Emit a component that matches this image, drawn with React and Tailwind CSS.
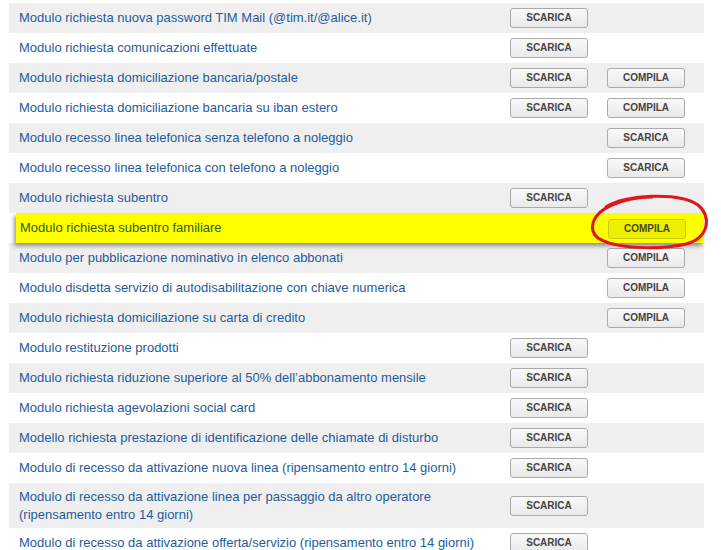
const rows = [
  { label: 'Modulo richiesta nuova password TIM Mail (@tim.it/@alice.it)', a: 'SCARICA' },
  { label: 'Modulo richiesta comunicazioni effettuate', a: 'SCARICA' },
  { label: 'Modulo richiesta domiciliazione bancaria/postale', a: 'SCARICA', b: 'COMPILA' },
  { label: 'Modulo richiesta domiciliazione bancaria su iban estero', a: 'SCARICA', b: 'COMPILA' },
  { label: 'Modulo recesso linea telefonica senza telefono a noleggio', b: 'SCARICA' },
  { label: 'Modulo recesso linea telefonica con telefono a noleggio', b: 'SCARICA' },
  { label: 'Modulo richiesta subentro', a: 'SCARICA' },
  { label: 'Modulo richiesta subentro familiare', b: 'COMPILA', highlight: true },
  { label: 'Modulo per pubblicazione nominativo in elenco abbonati', b: 'COMPILA' },
  { label: 'Modulo disdetta servizio di autodisabilitazione con chiave numerica', b: 'COMPILA' },
  { label: 'Modulo richiesta domiciliazione su carta di credito', b: 'COMPILA' },
  { label: 'Modulo restituzione prodotti', a: 'SCARICA' },
  { label: 'Modulo richiesta riduzione superiore al 50% dell’abbonamento mensile', a: 'SCARICA' },
  { label: 'Modulo richiesta agevolazioni social card', a: 'SCARICA' },
  { label: 'Modello richiesta prestazione di identificazione delle chiamate di disturbo', a: 'SCARICA' },
  { label: 'Modulo di recesso da attivazione nuova linea (ripensamento entro 14 giorni)', a: 'SCARICA' },
  { label: 'Modulo di recesso da attivazione linea per passaggio da altro operatore (ripensamento entro 14 giorni)', a: 'SCARICA' },
  { label: 'Modulo di recesso da attivazione offerta/servizio (ripensamento entro 14 giorni)', a: 'SCARICA' },
]

function FormButton({ children, highlight }) {
  return (
    <button
      className={
        highlight
          ? 'w-[78px] h-[20px] rounded-[3px] border border-[#c9c900] bg-[#eeee00] text-[10px] font-bold text-[#4a4a10] leading-none'
          : 'w-[78px] h-[20px] rounded-[3px] border border-[#ababab] bg-gradient-to-b from-[#f9f9f9] to-[#e9e9e9] text-[10px] font-bold text-[#444] leading-none'
      }
    >
      {children}
    </button>
  )
}

function Row({ row, index }) {
  if (row.highlight) {
    return (
      <div className="relative z-10 ml-[7px] grid grid-cols-[484px_97px_1fr] items-center min-h-[30px] bg-[#ffff00] shadow-[-2px_3px_4px_rgba(0,0,0,0.4)]">
        <div className="pl-[4px] pr-[10px] py-[6px] leading-[18px] text-[#2f5d14]">{row.label}</div>
        <div className="pl-[10px]">{row.a && <FormButton highlight>{row.a}</FormButton>}</div>
        <div className="pl-[11px]">{row.b && <FormButton highlight>{row.b}</FormButton>}</div>
      </div>
    )
  }
  return (
    <div
      className={`grid grid-cols-[491px_97px_1fr] items-center min-h-[30px] ${
        index % 2 === 0 ? 'bg-[#efefef]' : 'bg-white'
      }`}
    >
      <div className="pl-[10px] pr-[10px] py-[4.5px] leading-[18px] text-[#1d5c9e]">{row.label}</div>
      <div className="pl-[10px] flex">{row.a && <FormButton>{row.a}</FormButton>}</div>
      <div className="pl-[10px] flex">{row.b && <FormButton>{row.b}</FormButton>}</div>
    </div>
  )
}

export default function App() {
  return (
    <div
      className="relative h-[550px] w-[721px] overflow-hidden bg-white text-[13px]"
      style={{ fontFamily: '"Liberation Sans", Arial, sans-serif' }}
    >
      <div className="ml-[9px] mt-[3px] w-[695px] flex flex-col">
        {rows.map((row, i) => (
          <Row key={i} row={row} index={i} />
        ))}
      </div>

      {/* Red hand-drawn circle around the highlighted button */}
      <svg className="absolute left-0 top-0 z-20 pointer-events-none" width="721" height="550" viewBox="0 0 721 550">
        <path
          d="M606 207 C624 194 680 192 698 205 C712 216 709 238 686 244 C660 250 615 249 598 238 C588 230 591 214 612 205 C626 199 640 197 652 197"
          fill="none"
          stroke="#e3141c"
          strokeWidth="3"
          strokeLinecap="round"
        />
      </svg>
    </div>
  )
}
